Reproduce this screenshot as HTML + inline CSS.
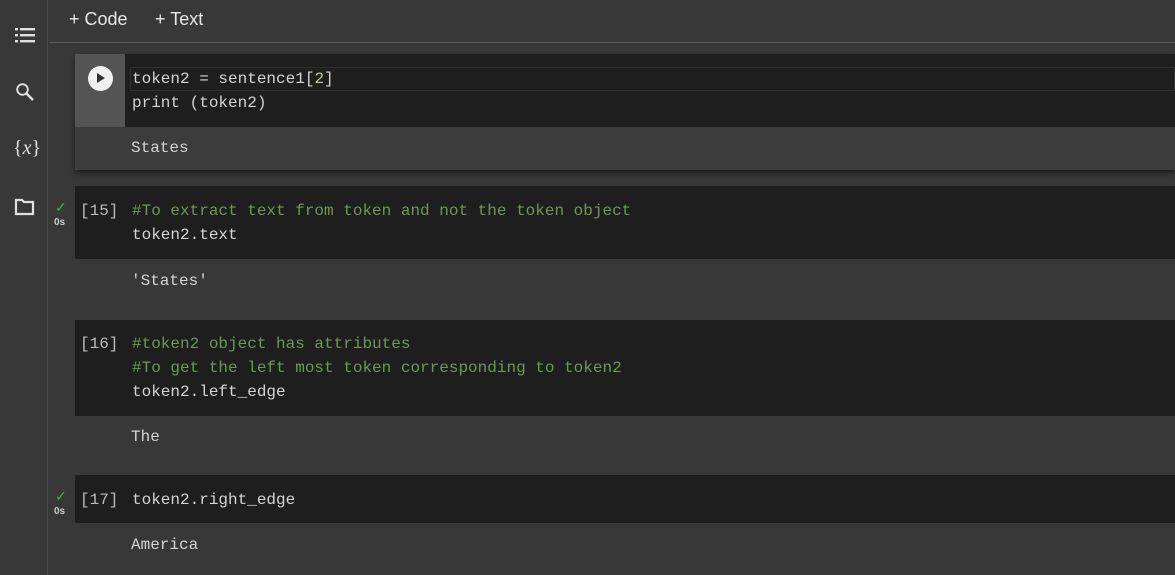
<!DOCTYPE html>
<html><head><meta charset="utf-8"><style>
*{margin:0;padding:0;box-sizing:border-box}
body{width:1175px;height:575px;overflow:hidden;background:#383838;font-family:"Liberation Sans",sans-serif;position:relative}
.side{position:absolute;left:0;top:0;width:48px;height:575px;background:#383838;border-right:1px solid #4a4a4a}
.top{position:absolute;left:49px;top:0;right:0;height:43px;border-bottom:1px solid #5a5a5a}
.top span{position:absolute;top:9px;color:#e8e8e8;font-size:18px}
.mono{font-family:"Liberation Mono",monospace;font-size:16px;line-height:24px;color:#d4d4d4;white-space:pre}
.code{position:absolute;left:75px;right:0;background:#1e1e1e}
.abs{position:absolute}
.c{color:#6a9955}
.n{color:#b5cea8}
.ok{position:absolute;left:55px;color:#2fb45a;font-size:14px}
.os{position:absolute;left:54px;color:#ccc;font-size:10px;font-weight:bold}
.ic{position:absolute;left:14px}
</style></head><body>
<div class="side">
<svg class="ic" style="top:25px" width="22" height="20" viewBox="0 0 22 20"><g fill="#e0e0e0"><rect x="1" y="3" width="3" height="2.4"/><rect x="6" y="3" width="15" height="2.4"/><rect x="1" y="9" width="3" height="2.4"/><rect x="6" y="9" width="15" height="2.4"/><rect x="1" y="15" width="3" height="2.4"/><rect x="6" y="15" width="15" height="2.4"/></g></svg>
<svg class="ic" style="top:81px" width="22" height="22" viewBox="0 0 22 22"><circle cx="8.5" cy="8.5" r="5.3" fill="none" stroke="#e0e0e0" stroke-width="1.9"/><path d="M12.5 12.5L19 19" stroke="#e0e0e0" stroke-width="2.4"/></svg>
<div class="abs" style="left:13px;top:137px;color:#e0e0e0;font-family:'Liberation Serif',serif;font-size:20px">{<i>x</i>}</div>
<svg class="ic" style="top:197px" width="22" height="20" viewBox="0 0 22 20"><path d="M2 3h6l2 2h9v12H2z" fill="none" stroke="#e0e0e0" stroke-width="2.2"/></svg>
</div>
<div class="top"><span style="left:20px">+ Code</span><span style="left:106px">+ Text</span></div>

<div class="abs" style="left:75px;top:54px;right:0;height:116px;background:#3c3c3c;box-shadow:0 3px 5px rgba(0,0,0,.5)"></div>
<div class="code" style="top:54px;height:73px"></div>
<div class="abs" style="left:75px;top:54px;width:50px;height:73px;background:#545454"></div>
<div class="abs" style="left:88px;top:66px;width:25px;height:25px;border-radius:50%;background:#f0f0f0"></div>
<div class="abs" style="left:97px;top:73px;width:0;height:0;border-left:8px solid #333;border-top:5.5px solid transparent;border-bottom:5.5px solid transparent"></div>
<div class="abs" style="left:130px;top:67px;right:0;height:24px;border:1px solid #303030"></div>
<div class="mono abs" style="left:132px;top:67px">token2 = sentence1[<span class="n">2</span>]
print (token2)</div>
<div class="mono abs" style="left:131px;top:136px">States</div>

<div class="code" style="top:186px;height:73px"></div>
<div class="ok" style="top:199px">✓</div><div class="os" style="top:217px">0s</div>
<div class="mono abs" style="left:80px;top:199px;color:#bbb">[15]</div>
<div class="mono abs" style="left:132px;top:199px"><span class="c">#To extract text from token and not the token object</span>
token2.text</div>
<div class="mono abs" style="left:131px;top:269px">'States'</div>

<div class="code" style="top:320px;height:96px"></div>
<div class="mono abs" style="left:80px;top:332px;color:#bbb">[16]</div>
<div class="mono abs" style="left:132px;top:332px"><span class="c">#token2 object has attributes
#To get the left most token corresponding to token2</span>
token2.left_edge</div>
<div class="mono abs" style="left:131px;top:425px">The</div>

<div class="code" style="top:475px;height:48px"></div>
<div class="ok" style="top:488px">✓</div><div class="os" style="top:506px">0s</div>
<div class="mono abs" style="left:80px;top:488px;color:#bbb">[17]</div>
<div class="mono abs" style="left:132px;top:488px">token2.right_edge</div>
<div class="mono abs" style="left:131px;top:533px">America</div>
</body></html>
